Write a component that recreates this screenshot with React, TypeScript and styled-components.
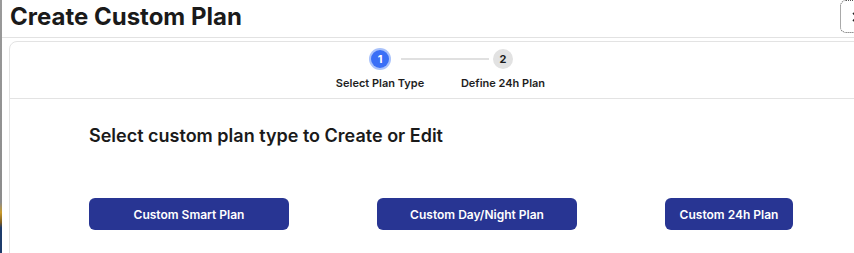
import styled, { createGlobalStyle } from "styled-components";
import { X } from "lucide-react";

const GlobalStyle = createGlobalStyle`
  html, body {
    margin: 0;
    padding: 0;
    background: #ffffff;
    overflow: hidden;
  }
  body {
    font-family: Inter, "Noto Sans", sans-serif;
    color: #1c1c1c;
  }
`;

const Screen = styled.div`
  display: flex;
  width: 100%;
  height: 253px;
  overflow: hidden;
`;

const Backdrop = styled.div`
  flex: 0 0 2px;
  background: linear-gradient(
    to bottom,
    #9a9a9a 0%,
    #8c8c8c 80%,
    #c99a2a 84%,
    #7a5a20 88%,
    #1d3b6b 90%,
    #1d3b6b 100%
  );
`;

const Dialog = styled.div`
  flex: 0 0 879px;
  display: flex;
  flex-direction: column;
  background: #ffffff;
`;

const Header = styled.div`
  flex-shrink: 0;
  display: flex;
  justify-content: space-between;
  align-items: flex-start;
  height: 38px;
  box-sizing: border-box;
  padding: 0 7px 0 8px;
  border-bottom: 1px solid #e2e2e2;
`;

const Title = styled.h1`
  margin: 3px 0 0;
  font-size: 24px;
  line-height: 28px;
  font-weight: 700;
  color: #1a1a1a;
`;

const CloseButton = styled.button`
  flex-shrink: 0;
  width: 34px;
  height: 33px;
  display: flex;
  align-items: center;
  justify-content: center;
  padding: 0;
  background: #ffffff;
  border: 1px dotted #555;
  border-radius: 6px;
  color: #222;
`;

const Card = styled.div`
  flex-shrink: 0;
  margin: 3px 7px 0;
  border: 1px solid #e3e3e3;
  border-radius: 8px;
  min-height: 260px;
`;

const Stepper = styled.div`
  display: flex;
  justify-content: center;
  gap: 19px;
  padding: 6px 0 8px;
  border-bottom: 1px solid #e3e3e3;
`;

const Step = styled.div<{ $first?: boolean }>`
  position: relative;
  width: 104px;
  display: flex;
  flex-direction: column;
  align-items: center;

  &::before {
    content: "";
    display: ${(p) => (p.$first ? "none" : "block")};
    position: absolute;
    top: 10px;
    left: -50px;
    width: 88px;
    height: 2px;
    background: #e0e0e0;
  }
`;

const CircleSlot = styled.div`
  height: 22px;
  display: flex;
  align-items: center;
`;

const Circle = styled.div<{ $active?: boolean }>`
  width: ${(p) => (p.$active ? "18px" : "20px")};
  height: ${(p) => (p.$active ? "18px" : "20px")};
  border-radius: 50%;
  display: flex;
  align-items: center;
  justify-content: center;
  font-size: 11px;
  font-weight: 700;
  background: ${(p) => (p.$active ? "#3a6ff6" : "#e2e2e2")};
  color: ${(p) => (p.$active ? "#ffffff" : "#1c1c1c")};
  box-shadow: ${(p) => (p.$active ? "0 0 0 2px #a9c2fb" : "none")};
`;

const StepLabel = styled.div`
  margin-top: 7px;
  font-size: 11px;
  line-height: 13px;
  font-weight: 600;
  color: #1e1e1e;
  white-space: nowrap;
`;

const Body = styled.div`
  padding: 26px 80px 0 79px;
`;

const Heading = styled.h2`
  margin: 0;
  font-size: 18px;
  line-height: 22px;
  font-weight: 600;
  color: #1a1a1a;
`;

const ButtonRow = styled.div`
  display: flex;
  justify-content: space-between;
  margin-top: 51px;
`;

const PlanButton = styled.button<{ $wide?: boolean }>`
  width: ${(p) => (p.$wide ? "200px" : "128px")};
  height: 32px;
  border: none;
  border-radius: 6px;
  background: #283593;
  color: #ffffff;
  font-family: Inter, "Noto Sans", sans-serif;
  font-size: 12px;
  font-weight: 600;
  cursor: pointer;
`;

const steps = ["Select Plan Type", "Define 24h Plan"];

export default function App() {
  return (
    <>
      <GlobalStyle />
      <Screen>
        <Backdrop />
        <Dialog>
          <Header>
            <Title>Create Custom Plan</Title>
            <CloseButton>
              <X size={14} strokeWidth={3} />
            </CloseButton>
          </Header>
          <Card>
            <Stepper>
              {steps.map((label, i) => (
                <Step key={label} $first={i === 0}>
                  <CircleSlot>
                    <Circle $active={i === 0}>{i + 1}</Circle>
                  </CircleSlot>
                  <StepLabel>{label}</StepLabel>
                </Step>
              ))}
            </Stepper>
            <Body>
              <Heading>Select custom plan type to Create or Edit</Heading>
              <ButtonRow>
                <PlanButton $wide>Custom Smart Plan</PlanButton>
                <PlanButton $wide>Custom Day/Night Plan</PlanButton>
                <PlanButton>Custom 24h Plan</PlanButton>
              </ButtonRow>
            </Body>
          </Card>
        </Dialog>
      </Screen>
    </>
  );
}
